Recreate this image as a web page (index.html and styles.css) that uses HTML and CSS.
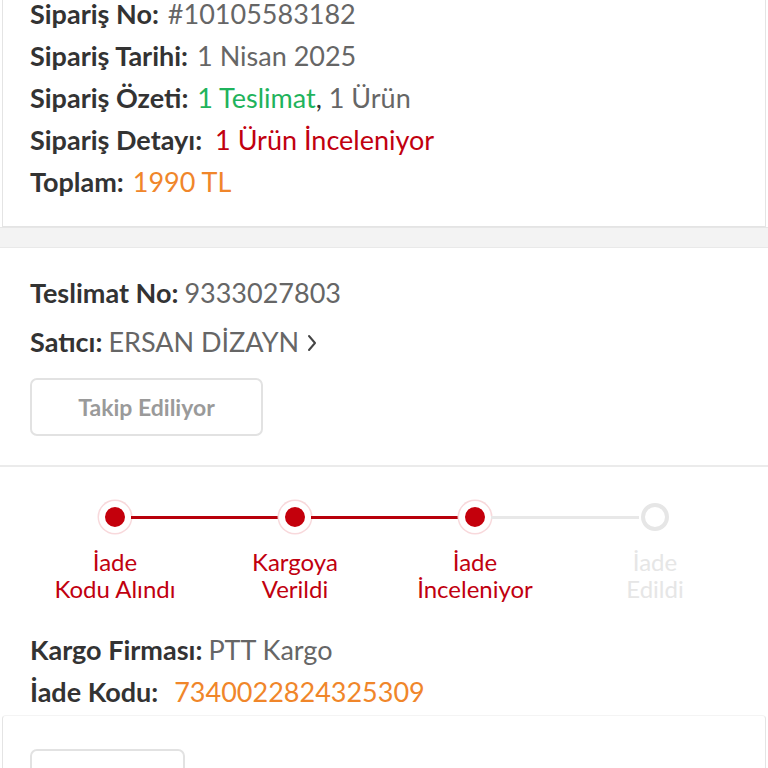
FILE: index.html
```html
<!DOCTYPE html>
<html lang="tr">
<head>
<meta charset="utf-8">
<link rel="stylesheet" href="styles.css">
</head>
<body>
<div class="order-card">
  <div class="row"><span class="label">Sipariş No:</span><span class="value">#10105583182</span></div>
  <div class="row"><span class="label">Sipariş Tarihi:</span><span class="value">1 Nisan 2025</span></div>
  <div class="row"><span class="label">Sipariş Özeti:</span><span class="value"><span class="green">1 Teslimat</span><span class="dark">,</span> 1 Ürün</span></div>
  <div class="row"><span class="label">Sipariş Detayı:</span><span class="value wide red">1 Ürün İnceleniyor</span></div>
  <div class="row"><span class="label">Toplam:</span><span class="value orange">1990 TL</span></div>
</div>
<div class="gap"></div>
<div class="section delivery">
  <div class="row tall"><span class="label">Teslimat No:</span><span class="value tight">9333027803</span></div>
  <div class="row tall"><span class="label light">Satıcı:</span><span class="value tight">ERSAN DİZAYN</span><svg class="chev" width="10" height="18" viewBox="0 0 10 18"><path d="M2 2 L8 9 L2 16" fill="none" stroke="#444" stroke-width="2" stroke-linecap="round" stroke-linejoin="round"/></svg></div>
  <div class="btn">Takip Ediliyor</div>
</div>
<div class="section tracking">
  <div class="stepper">
    <div class="step">
      <div class="track"><span class="seg none"></span><span class="dot done"></span><span class="seg red"></span></div>
      <div class="step-label">İade<br>Kodu Alındı</div>
    </div>
    <div class="step">
      <div class="track"><span class="seg red"></span><span class="dot done"></span><span class="seg red"></span></div>
      <div class="step-label">Kargoya<br>Verildi</div>
    </div>
    <div class="step">
      <div class="track"><span class="seg red"></span><span class="dot done"></span><span class="seg grey"></span></div>
      <div class="step-label">İade<br>İnceleniyor</div>
    </div>
    <div class="step">
      <div class="track"><span class="seg grey"></span><span class="dot todo"></span><span class="seg none"></span></div>
      <div class="step-label off">İade<br>Edildi</div>
    </div>
  </div>
  <div class="row"><span class="label">Kargo Firması:</span><span class="value tight">PTT Kargo</span></div>
  <div class="row"><span class="label">İade Kodu:</span><span class="value code orange">7340022824325309</span></div>
</div>
<div class="bottom-card">
  <div class="btn small"></div>
</div>
</body>
</html>
```

FILE: styles.css
```css
* { box-sizing: border-box; }
html, body { margin: 0; padding: 0; background: #ffffff; }
body {
  font-family: Lato, "Noto Sans", sans-serif;
  font-size: 27px;
  color: #333333;
  width: 768px;
  height: 768px;
  overflow: hidden;
}
.order-card {
  margin: -7px 2px 0 2px;
  padding: 0 0 23px 27px;
  background: #fff;
  border: 1px solid #e4e4e4;
  border-top: none;
}
.row {
  display: flex;
  align-items: center;
  height: 42px;
  line-height: 42px;
  white-space: nowrap;
}
.row.tall { height: 49px; line-height: 49px; }
.label { font-weight: 700; color: #333333; }
.value { color: #666666; margin-left: 9px; }
.value.tight { margin-left: 6px; }
.value.wide { margin-left: 13px; }
.value.code { margin-left: 16px; }
.green { color: #1fb35c; }
.dark { color: #333; }
.red { color: #c1000f; }
.orange { color: #f0862a; }
.chev { margin-left: 8px; margin-top: 3px; }
.gap {
  height: 21px;
  background: #f3f3f3;
  border-top: 1px solid #e6e6e6;
  border-bottom: 1px solid #e9e9e9;
}
.section { background: #fff; padding-left: 30px; }
.delivery {
  padding-top: 20px;
  padding-bottom: 29px;
  border-bottom: 2px solid #ebebeb;
}
.btn {
  margin-top: 12px;
  width: 233px;
  height: 58px;
  border: 2px solid #e2e2e2;
  border-radius: 7px;
  display: flex;
  align-items: center;
  justify-content: center;
  font-size: 23px;
  font-weight: 700;
  color: #9a9a9a;
}
.tracking { padding-top: 34px; padding-bottom: 2px; }
.stepper {
  display: grid;
  grid-template-columns: repeat(4, 180px);
  margin-left: -5px;
  margin-bottom: 27px;
}
.step { display: flex; flex-direction: column; align-items: stretch; }
.track { display: flex; align-items: center; height: 32px; }
.seg { flex: 1; height: 3px; }
.seg.red { background: #b8000b; }
.seg.grey { background: #e8e8e8; }
.seg.none { background: transparent; }
.dot {
  width: 32px;
  height: 32px;
  border-radius: 50%;
  flex: none;
}
.dot.done {
  background: #c4000c;
  border: 6px solid #ffffff;
  box-shadow: 0 0 0 1.5px #f8d9dc;
}
.dot.todo {
  width: 28px;
  height: 28px;
  margin: 0 2px;
  background: #fff;
  border: 4px solid #e6e6e6;
}
.step-label {
  margin-top: 15px;
  text-align: center;
  font-size: 24px;
  line-height: 27px;
  color: #c1000f;
}
.step-label.off { color: #e6e6e6; }
.bottom-card {
  margin: 0 2px;
  padding: 33px 0 0 27px;
  border-left: 1px solid #e4e4e4;
  border-right: 1px solid #e4e4e4;
  border-top: 1px solid #f4f4f4;
  border-radius: 4px 4px 0 0;
  height: 80px;
}
.btn.small { margin-top: 0; width: 155px; height: 50px; }
```
